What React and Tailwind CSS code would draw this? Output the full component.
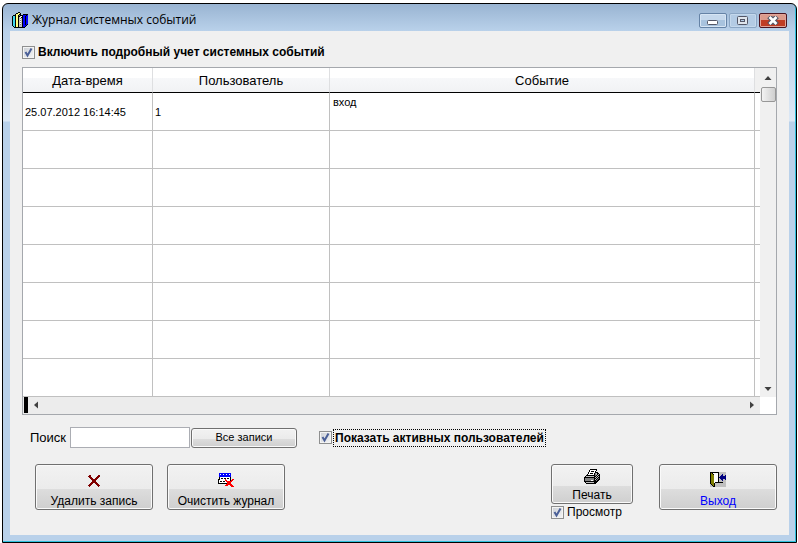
const palette = {
  k: "#000000",
  w: "#ffffff",
  g: "#c0c0c0",
  d: "#808080",
  b: "#0000ff",
  n: "#000080",
  c: "#40d8f0",
  y: "#ffff80",
  o: "#808000",
  r: "#ff0000",
  m: "#800000",
};

const books = [
  "......kk........",
  "....kkyyk.......",
  "...kyyykk..kkkkk",
  ".kkkyykdkkkbbbkb",
  "kcckyykkgwkbbkbb",
  "kcckyykgwkkbbkbb",
  "kcckyykgdgkbbkbb",
  "kcckyykgwgkbbkbb",
  "kcckyykgdgkbbkbb",
  "kcckyykgwgkbbkbb",
  "kcckyykgdgkbbkbb",
  "kcckyykgwgkbbkbb",
  "kcckyykgdgkbbkbk",
  "kcckyykgggkbbbk.",
  ".kckyykgggkbbk..",
  "..kkkkkkkkkkk...",
];

const cross = [
  ".mm.......mm",
  "mmm......mmm",
  ".mmm....mmm.",
  "..mmm..mmm..",
  "...mmmmmm...",
  "....mmmm....",
  "....mmmm....",
  "...mmmmmm...",
  "..mmm..mmm..",
  ".mmm....mmm.",
  "mmm......mmm",
  ".m........m.",
];

const clear = [
  ".bbbbbbbbbbbb...",
  ".bwbbwbbwbbwb...",
  ".bbbbbbbbbbbb...",
  ".bbbbbbbbbbbb...",
  ".kwwwwwwwwwwk...",
  ".kwkkwkkwkkwk...",
  "kkwwwwwrwwwwk.rr",
  "kwwwwwwrrwwwkrr.",
  "kwkkwkkwrrrrrr..",
  "kwwwwwwwwrrrr...",
  "kkkkkkkkkrrrr...",
  "........rrrrrr..",
  ".......rrr..rrr.",
  ".............rrr",
];

const printer = [
  "......kkkkkkk....",
  ".....kwwwwwwk....",
  ".....kwkkkwk.....",
  "....kwwwwwwkkk...",
  "....kwkkkwkdgkk..",
  "...kwwwwwwkdgkgk.",
  "..kkkkkkkkkdkgkk.",
  ".kggggggggkkgkgk.",
  "kkkkkkkkkkkgkgkk.",
  "kdddddddddkkgkdk.",
  "kdddddddddkgkdkk.",
  "kddddddwwdkkdkk..",
  "kkkkkkkkkkkkkk...",
  ".kggggggggkkk....",
  "..kkkkkkkkkk.....",
];

const door = [
  "kkkkkkkkkggggggg",
  "kokwwwwwkggggggg",
  "kookwwwwkgggnggg",
  "kooowwwwkggnnggn",
  "kooowwwwkgnnnnnn",
  "kooowwwwknnnnnnn",
  "kooowwwwkgnnnnnn",
  "kooowwwwkggnnggn",
  "kooowwwwkgggnggg",
  "kooowwwwkggggggg",
  "kooowkkkkkkkkggg",
  "koookggggggggggg",
  "gkookggggggggggg",
  "ggkokggggggggggg",
  "gggkkggggggggggg",
];

const PixelIcon = ({ rows }) => (
  <svg
    width={rows[0].length}
    height={rows.length}
    shapeRendering="crispEdges"
    aria-hidden="true"
  >
    {rows.map((row, y) =>
      row
        .split("")
        .map((cell, x) =>
          palette[cell] ? (
            <rect
              key={`${x}-${y}`}
              x={x}
              y={y}
              width="1"
              height="1"
              fill={palette[cell]}
            />
          ) : null
        )
    )}
  </svg>
);

const CheckBox = ({ id, label, className = "", labelClass = "" }) => (
  <div className={`flex items-center ${className}`}>
    <span className="grid shrink-0">
      <input
        id={id}
        type="checkbox"
        defaultChecked
        className="peer col-start-1 row-start-1 h-[13px] w-[13px] appearance-none border border-[#8e8f8f] bg-linear-to-br from-[#cbcfd5] to-[#f6f6f6] shadow-[inset_0_0_0_1px_#f4f4f4]"
      />
      <svg
        width="13"
        height="13"
        viewBox="0 0 13 13"
        className="pointer-events-none invisible col-start-1 row-start-1 peer-checked:visible"
      >
        <path
          d="M3.5 6 L5.5 9.5 L9.5 2.5"
          fill="none"
          stroke="#4a5f97"
          strokeWidth="2"
        />
      </svg>
    </span>
    <label htmlFor={id} className={labelClass}>
      {label}
    </label>
  </div>
);

const buttonFace =
  "rounded-[3px] border border-[#707070] bg-[linear-gradient(#f2f2f2,#ebebeb_55%,#dddddd_55%,#cfcfcf)] shadow-[inset_0_0_0_1px_#fafafa]";

const ActionButton = ({ icon, label, className = "" }) => (
  <button
    type="button"
    className={`flex flex-col items-center justify-end text-xs leading-4 ${buttonFace} ${className}`}
  >
    <PixelIcon rows={icon} />
    {label}
  </button>
);

const WindowButton = ({ label, className, children }) => (
  <button
    type="button"
    aria-label={label}
    className={`flex h-[15px] w-7 items-center justify-center rounded-xs border ${className}`}
  >
    {children}
  </button>
);

const TitleBar = () => (
  <header className="flex h-[27px] items-center gap-1 px-[2px] pt-[5px]">
    <PixelIcon rows={books} />
    <h1 className="flex-1 font-['Open_Sans',sans-serif] text-xs text-black">
      Журнал системных событий
    </h1>
    <div className="flex gap-[2px]">
      <WindowButton
        label="Свернуть"
        className="border-[#6583a6] bg-linear-to-b from-[#c5d8ec] from-50% to-[#a8c3de] to-50% shadow-[inset_0_0_0_1px_#d6e5f4]"
      >
        <svg width="12" height="9" aria-hidden="true">
          <rect x="0.5" y="4.5" width="10" height="4" rx="1" fill="#fff" stroke="#535666" />
        </svg>
      </WindowButton>
      <WindowButton
        label="Развернуть"
        className="border-[#8ba6c4] bg-[#b3cbe4] shadow-[inset_0_0_0_1px_#c4d8ec]"
      >
        <svg width="12" height="9" aria-hidden="true">
          <rect x="0.5" y="0.5" width="10" height="8" rx="1" fill="#dfe5ec" stroke="#535666" />
          <rect x="3.5" y="3.5" width="4" height="2" fill="#b3cbe4" stroke="#535666" />
        </svg>
      </WindowButton>
      <WindowButton
        label="Закрыть"
        className="border-[#4b1420] bg-linear-to-b from-[#dc9b8c] from-50% to-[#bf3c24] to-50% shadow-[inset_0_0_0_1px_#e0a499]"
      >
        <svg width="12" height="9" viewBox="0 0 12 9" aria-hidden="true">
          <path d="M2 0.5 L10 8.5 M10 0.5 L2 8.5" stroke="#535666" strokeWidth="5" />
          <path d="M2.5 1 L9.5 8 M9.5 1 L2.5 8" stroke="#fff" strokeWidth="2.6" />
        </svg>
      </WindowButton>
    </div>
  </header>
);

const events = [{ date: "25.07.2012 16:14:45", user: "1", event: "вход" }];
const rows = [...events, ...Array(7).fill({})];

const headCell =
  "border-r border-b border-r-[#dedfe1] border-b-black bg-linear-to-b from-white from-40% via-[#f7f8fa] via-40% to-[#f1f2f4] px-0 pt-[2px] pb-0 font-normal";
const bodyCell = "border-r border-b border-[#c0c0c0]";

const EventTable = () => (
  <table className="w-full table-fixed border-separate border-spacing-0 bg-white">
    <colgroup>
      <col className="w-[130px]" />
      <col className="w-[177px]" />
      <col />
      <col className="w-[5px]" />
    </colgroup>
    <thead>
      <tr className="h-[25px] text-[13px]">
        <th className={headCell}>Дата-время</th>
        <th className={headCell}>Пользователь</th>
        <th className={headCell}>Событие</th>
        <td className="border-b border-black bg-[#f0f0f0] p-0" />
      </tr>
    </thead>
    <tbody className="text-[11px] leading-4">
      {rows.map((row, index) => (
        <tr key={index} className="h-[38px]">
          <td className={`${bodyCell} px-[2px] py-0 whitespace-nowrap`}>{row.date}</td>
          <td className={`${bodyCell} px-[2px] py-0`}>{row.user}</td>
          <td className={`${bodyCell} px-[3px] pt-px pb-0 align-top`}>{row.event}</td>
          <td className="border-b border-[#c0c0c0] p-0" />
        </tr>
      ))}
    </tbody>
  </table>
);

const Arrow = ({ d }) => (
  <svg width="8" height="8" viewBox="0 0 8 8" aria-hidden="true">
    <path d={d} fill="#404040" />
  </svg>
);

const EventLog = () => (
  <section className="border border-[#a5a8ad] bg-white">
    <div className="flex">
      <div className="min-w-0 flex-1">
        <EventTable />
      </div>
      <div className="flex w-4 flex-col items-center bg-[#f0f0f0]">
        <div className="flex h-[19px] items-center">
          <Arrow d="M0.5 6 L4 2 L7.5 6 Z" />
        </div>
        <div className="h-[15px] w-[15px] rounded-xs border border-[#979797] bg-linear-to-r from-[#f3f3f3] to-[#cfcfcf]" />
        <div className="flex-1" />
        <div className="flex h-4 items-center">
          <Arrow d="M0.5 2 L4 6 L7.5 2 Z" />
        </div>
      </div>
    </div>
    <div className="flex h-[17px]">
      <div className="flex flex-1 items-start bg-[#ececec] pl-px">
        <div className="h-4 w-1 bg-black" />
        <div className="flex h-4 w-4 items-center justify-center">
          <Arrow d="M6 0.5 L2 4 L6 7.5 Z" />
        </div>
        <div className="flex-1" />
        <div className="flex h-4 w-4 items-center justify-center">
          <Arrow d="M2 0.5 L6 4 L2 7.5 Z" />
        </div>
      </div>
      <div className="w-4 bg-white" />
    </div>
  </section>
);

const App = () => {
  return (
    <div className="flex min-h-screen flex-col bg-white pt-[3px] pr-px pl-[2px] font-['Liberation_Sans',Arial,sans-serif] text-[13px] text-black">
      <div className="flex flex-1 flex-col rounded-t-md border border-black bg-[linear-gradient(#99b4d2,#b9d1ea_27px,#dce8f5_117px,#b9d1ea_118px)] pr-[7px] pb-[7px] pl-[7px] shadow-[inset_-1px_-1px_0_#2fc0dc]">
        <TitleBar />
        <main className="flex-1 bg-[#f0f0f0] px-3 pt-[13px]">
          <CheckBox
            id="detailed"
            label="Включить подробный учет системных событий"
            labelClass="pl-[3px] text-xs font-bold"
            className="mb-[7px] h-4"
          />
          <EventLog />

          <div className="mt-3 flex items-center pl-2">
            <label htmlFor="search" className="w-10">
              Поиск
            </label>
            <input
              id="search"
              type="text"
              className="h-[21px] w-[120px] border border-[#abadb3] bg-white px-1"
            />
            <button
              type="button"
              className={`ml-px h-5 w-[106px] text-[11px] ${buttonFace}`}
            >
              Все записи
            </button>
            <CheckBox
              id="active"
              label="Показать активных пользователей"
              labelClass="ml-px border border-dotted border-black px-px text-xs font-bold"
              className="ml-[22px]"
            />
          </div>

          <div className="mt-4 flex items-start justify-between pl-[13px]">
            <div className="flex gap-[14px]">
              <ActionButton icon={cross} label="Удалить запись" className="h-[46px] w-[118px] gap-1.5" />
              <ActionButton icon={clear} label="Очистить журнал" className="h-[46px] w-[118px] gap-1.5" />
            </div>
            <div className="flex items-start gap-[26px]">
              <div>
                <ActionButton icon={printer} label="Печать" className="h-10 w-[82px] gap-[3px]" />
                <CheckBox id="preview" label="Просмотр" labelClass="pl-[3px] text-xs leading-4" />
              </div>
              <ActionButton icon={door} label="Выход" className="h-[46px] w-[118px] gap-1.5 text-[#0000ff]" />
            </div>
          </div>
        </main>
      </div>
    </div>
  );
};

export default App;
